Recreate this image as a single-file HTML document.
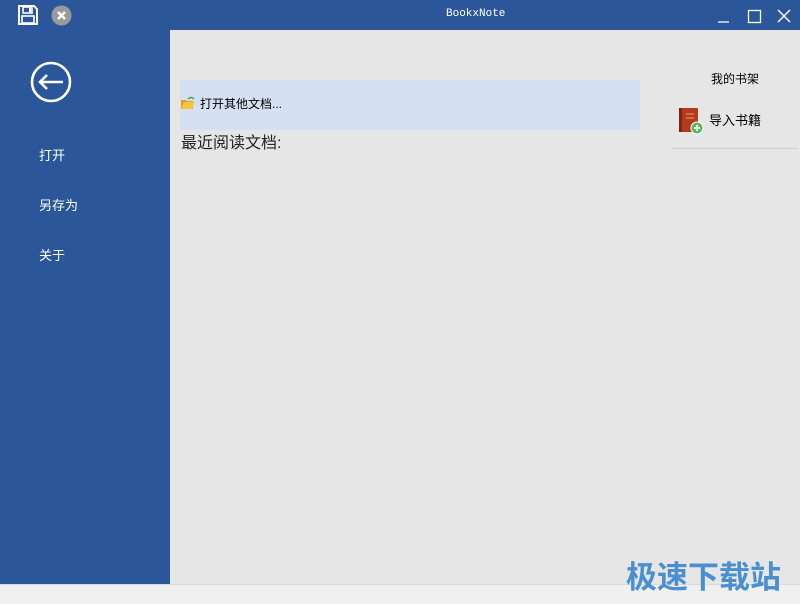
<!DOCTYPE html>
<html><head><meta charset="utf-8"><style>
body{margin:0;width:800px;height:603px;overflow:hidden;background:#e6e6e6;font-family:"Liberation Sans","Noto Sans CJK SC",sans-serif;position:relative}
div{position:absolute}
.t{color:#fff;font-size:13px}
</style></head><body>
<div style="left:0;top:0;width:800px;height:30px;background:#2b579a"></div>
<div style="left:0;top:30px;width:170px;height:554px;background:#2b579a"></div>
<div style="left:0;top:584px;width:800px;height:19px;background:#f0f0f0;border-top:1px solid #dcdcdc"></div>
<svg style="position:absolute;left:17px;top:4px" width="22" height="22" viewBox="0 0 22 22"><path d="M2 2h15l3 3v15H2z" fill="none" stroke="#fff" stroke-width="2"/><rect x="6" y="3" width="9" height="6" fill="none" stroke="#fff" stroke-width="1.6"/><rect x="12" y="4" width="2" height="4" fill="#fff"/><rect x="5" y="12" width="12" height="7" fill="none" stroke="#fff" stroke-width="1.6"/></svg>
<svg style="position:absolute;left:51px;top:5px" width="21" height="21"><circle cx="10.5" cy="10.5" r="10" fill="#9a9a9a"/><path d="M7 7l7 7M14 7l-7 7" stroke="#fff" stroke-width="2.4"/></svg>
<div style="left:446px;top:8px;color:#fff;font-family:'Liberation Mono',monospace;font-size:11px">BookxNote</div>
<svg style="position:absolute;left:715px;top:8px" width="80" height="16"><path d="M3 14h11" stroke="#fff" stroke-width="1.3"/><rect x="33.5" y="2.5" width="12" height="12" fill="none" stroke="#fff" stroke-width="1.3"/><path d="M63 2l12 12M75 2L63 14" stroke="#fff" stroke-width="1.5"/></svg>
<svg style="position:absolute;left:30px;top:61px" width="42" height="42"><circle cx="21" cy="21" r="19" fill="none" stroke="#fff" stroke-width="2.6"/><path d="M33 21H10M17 14l-7 7 7 7" fill="none" stroke="#fff" stroke-width="2.6"/></svg>
<div class="t" style="left:39px;top:145px">打开</div>
<div class="t" style="left:39px;top:195px">另存为</div>
<div class="t" style="left:39px;top:245px">关于</div>
<div style="left:180px;top:80px;width:460px;height:50px;background:#d5e1f2"></div>
<svg style="position:absolute;left:180px;top:96px" width="16" height="14"><path d="M1 4h5l1 1h6v8H1z" fill="#e8a21a"/><path d="M1 13l3-7h11l-3 7z" fill="#f5c542"/><path d="M8 3q3-3 6 0" stroke="#3aa845" stroke-width="1.5" fill="none"/></svg>
<div style="left:200px;top:95px;font-size:12px;color:#000">打开其他文档...</div>
<div style="left:181px;top:129px;font-size:16px;color:#222">最近阅读文档:</div>
<div style="left:711px;top:70px;font-size:12px;color:#000">我的书架</div>
<svg style="position:absolute;left:677px;top:106px" width="28" height="30"><rect x="2" y="2" width="19" height="24" rx="1" fill="#b33a1c"/><rect x="2" y="2" width="3" height="24" fill="#7e2410"/><path d="M9 8h8M9 12h8" stroke="#e07a55" stroke-width="1.5"/><circle cx="20" cy="22" r="6" fill="#5cb85c" stroke="#fff"/><path d="M17 22h6M20 19v6" stroke="#fff" stroke-width="2"/></svg>
<div style="left:709px;top:110px;font-size:13px;color:#000">导入书籍</div>
<div style="left:672px;top:148px;width:126px;height:1px;background:#d0d0d0"></div>
<div style="left:626px;top:552px;font-size:31px;font-weight:bold;color:#4a90d0;letter-spacing:0">极速下载站</div>
</body></html>
